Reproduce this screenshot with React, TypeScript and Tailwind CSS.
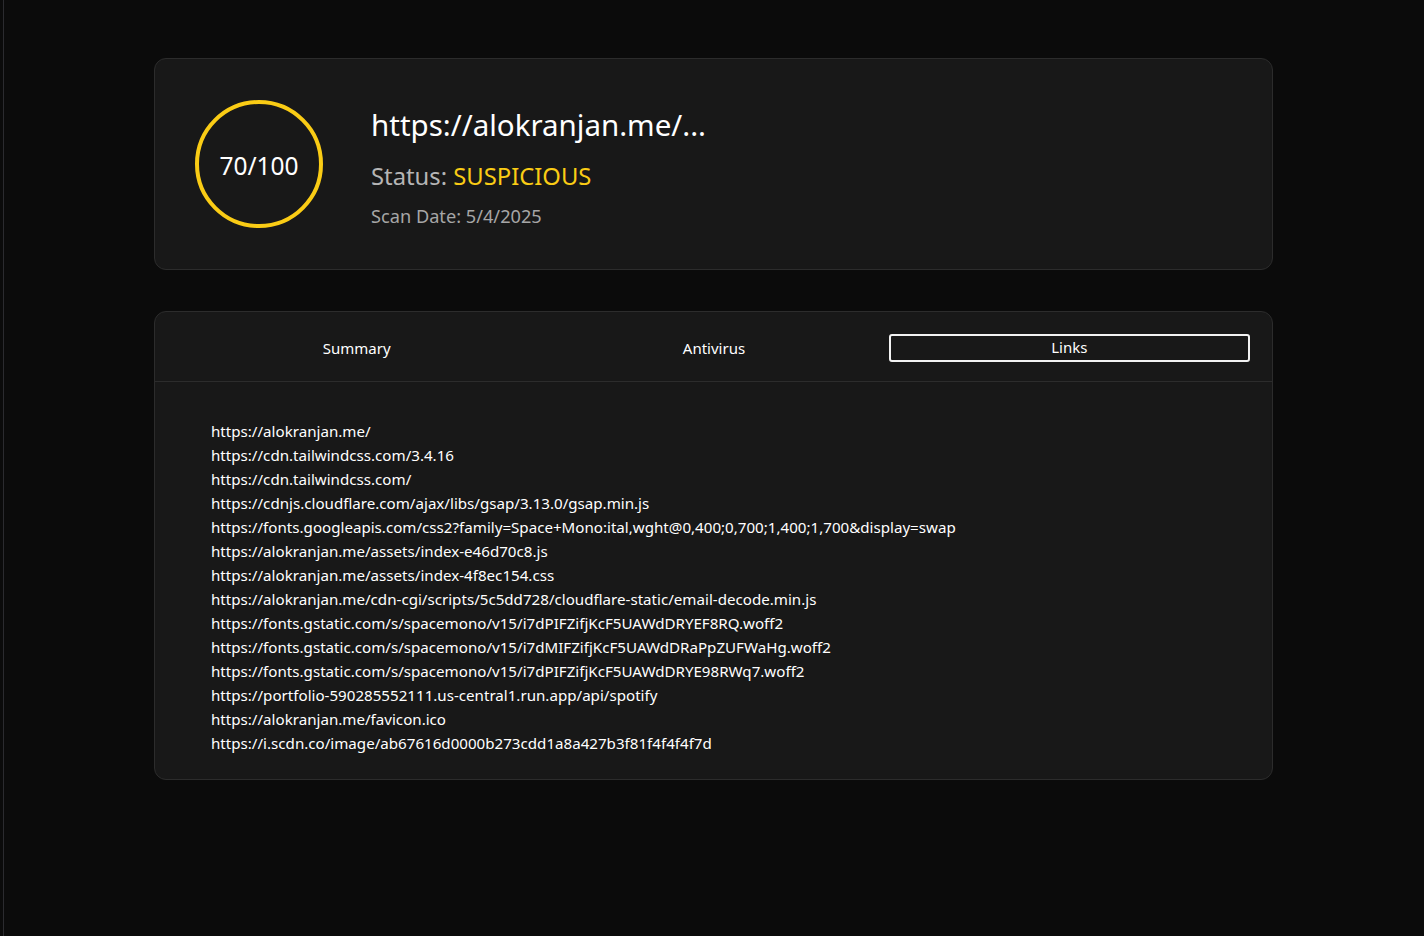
import React from "react";

const links = [
  "https://alokranjan.me/",
  "https://cdn.tailwindcss.com/3.4.16",
  "https://cdn.tailwindcss.com/",
  "https://cdnjs.cloudflare.com/ajax/libs/gsap/3.13.0/gsap.min.js",
  "https://fonts.googleapis.com/css2?family=Space+Mono:ital,wght@0,400;0,700;1,400;1,700&display=swap",
  "https://alokranjan.me/assets/index-e46d70c8.js",
  "https://alokranjan.me/assets/index-4f8ec154.css",
  "https://alokranjan.me/cdn-cgi/scripts/5c5dd728/cloudflare-static/email-decode.min.js",
  "https://fonts.gstatic.com/s/spacemono/v15/i7dPIFZifjKcF5UAWdDRYEF8RQ.woff2",
  "https://fonts.gstatic.com/s/spacemono/v15/i7dMIFZifjKcF5UAWdDRaPpZUFWaHg.woff2",
  "https://fonts.gstatic.com/s/spacemono/v15/i7dPIFZifjKcF5UAWdDRYE98RWq7.woff2",
  "https://portfolio-590285552111.us-central1.run.app/api/spotify",
  "https://alokranjan.me/favicon.ico",
  "https://i.scdn.co/image/ab67616d0000b273cdd1a8a427b3f81f4f4f4f7d",
];

export default function App() {
  return (
    <div
      className="min-h-[936px] w-full bg-[#0b0b0b] text-white flex"
      style={{ fontFamily: '"Noto Sans", "Open Sans", sans-serif' }}
    >
      <div className="w-[4px] shrink-0 border-r border-[#2b2b2f] bg-[#0b0b0b]" />
      <div className="flex-1 pt-[58px] pl-[150px] pr-[151px]">
        <div className="rounded-xl border border-[#2c2c2c] bg-[#181818] h-[212px] flex items-center pl-[40px]">
          <div className="w-[128px] h-[128px] rounded-full border-4 border-[#facc15] flex items-center justify-center text-[24.5px] pt-[4px]">
            70/100
          </div>
          <div className="ml-[48px] mt-[5px] flex flex-col">
            <div className="text-[29.5px] leading-[40px]">https://alokranjan.me/...</div>
            <div className="text-[23.8px] leading-[32px] mt-[15px] text-[#b5b5b5]">
              Status: <span className="text-[#facc15]">SUSPICIOUS</span>
            </div>
            <div className="text-[18.2px] leading-[24px] mt-[12px] text-[#a6a6a6]">Scan Date: 5/4/2025</div>
          </div>
        </div>

        <div className="mt-[41px] rounded-xl border border-[#2c2c2c] bg-[#181818]">
          <div className="h-[70px] border-b border-[#2c2c2c] grid grid-cols-3 items-center pl-[23px] pr-[22px] text-[15px] pt-[2px]">
            <div className="flex justify-center pt-[2px]">Summary</div>
            <div className="flex justify-center pt-[2px]">Antivirus</div>
            <div className="h-[28px] ml-[-4px] rounded-[3px] border-2 border-[#f2f2f2] flex items-center justify-center">Links</div>
          </div>
          <div className="pl-[56px] pt-[37px] pb-[24px] text-[15.13px] leading-[24px]">
            {links.map((l) => (
              <div key={l}>{l}</div>
            ))}
          </div>
        </div>
      </div>
    </div>
  );
}
